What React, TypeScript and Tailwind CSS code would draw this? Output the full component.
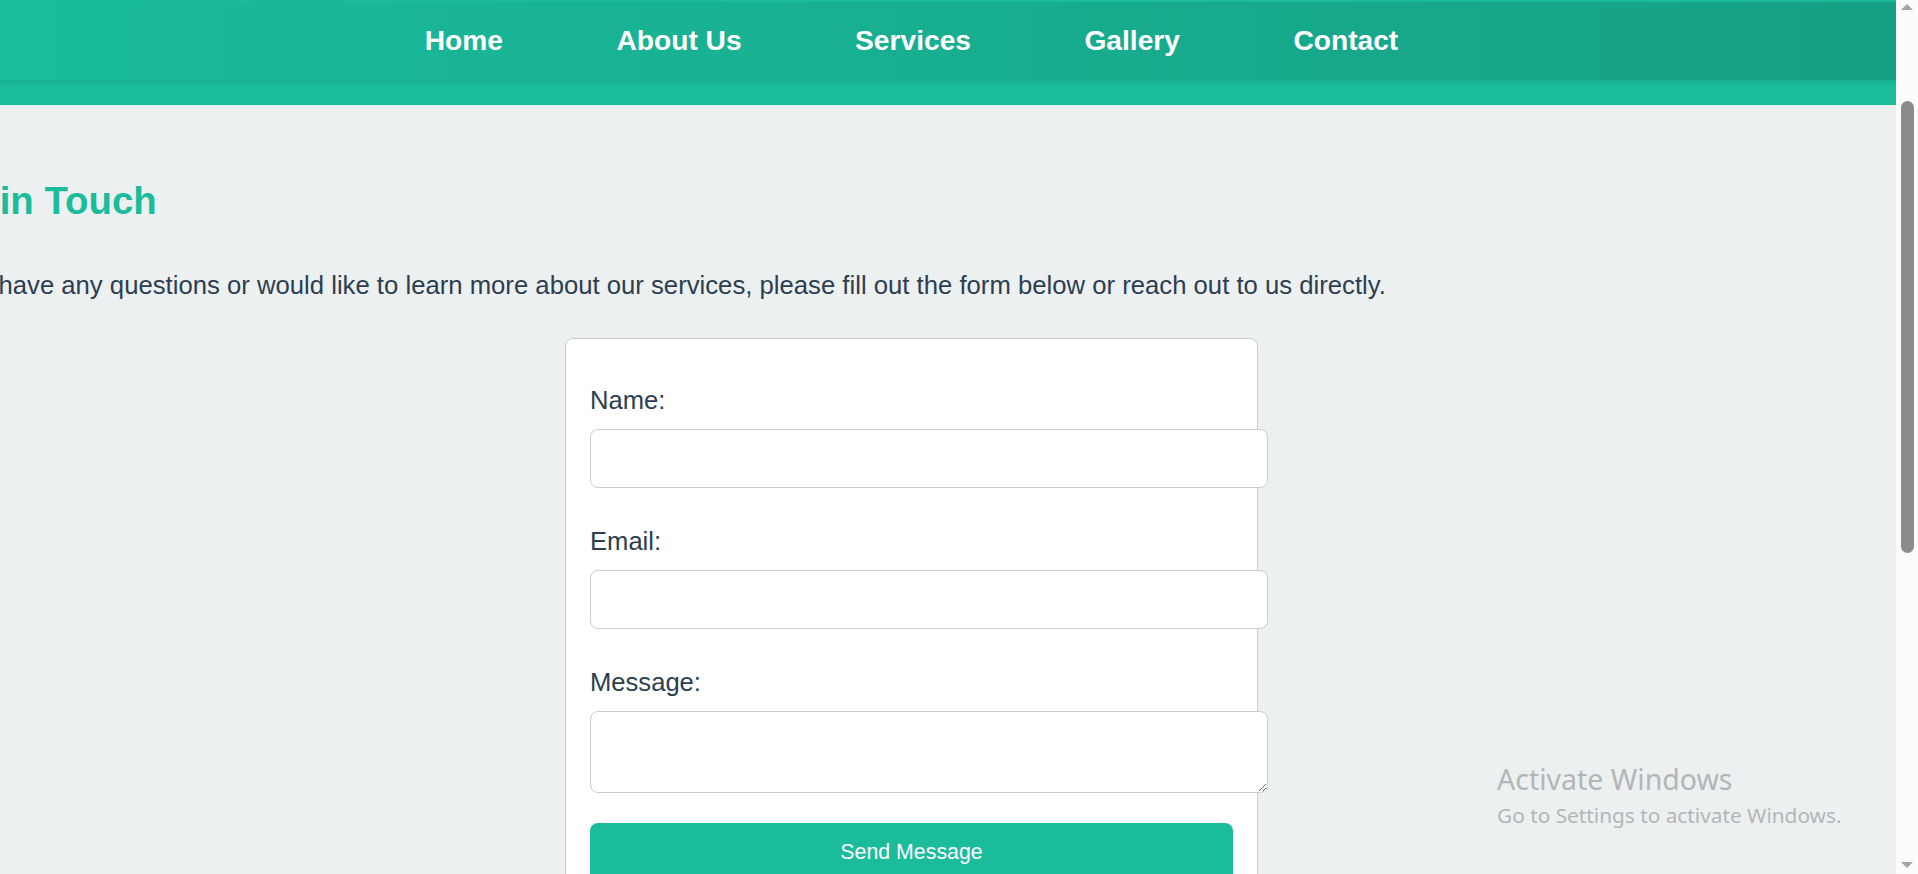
import React from "react";

const navItems = ["Home", "About Us", "Services", "Gallery", "Contact"];

function Field({ label, textarea, last }: { label: string; textarea?: boolean; last?: boolean }) {
  return (
    <div className={last ? "flex flex-col" : "flex flex-col mb-[39.6px]"}>
      <label className="block text-[25.6px] leading-[29.4px] text-[#2c3e50]">{label}</label>
      {textarea ? (
        <textarea className="mt-[13.2px] block w-[678px] h-[82px] bg-white border border-[#cccccc] rounded-[8px] outline-none resize" />
      ) : (
        <input
          type="text"
          className="mt-[13.2px] block w-[678px] h-[59px] bg-white border border-[#cccccc] rounded-[8px] outline-none"
        />
      )}
    </div>
  );
}

export default function App() {
  return (
    <div className="w-[1918px] h-[874px] overflow-hidden flex bg-[#ecf0f1] font-['Liberation_Sans',Arial,sans-serif]">
      <div className="relative w-[1896px] h-full overflow-hidden flex flex-col shrink-0">
        <header className="h-[105px] shrink-0 bg-[#1abc9c] pt-[2px]">
          <nav className="h-[78px] bg-linear-to-r from-[#1abc9c] to-[#16a085] shadow-[0_2px_4px_rgba(0,0,0,0.08)]">
            <ul className="w-[1823px] flex justify-center gap-[113.5px] pt-[23px]">
              {navItems.map((n) => (
                <li key={n} className="text-white font-bold text-[28.16px] leading-[32px] whitespace-nowrap">
                  {n}
                </li>
              ))}
            </ul>
          </nav>
        </header>

        <main className="w-[1823px] flex flex-col">
          <h2 className="mt-[74px] ml-[-75px] text-[38.4px] leading-[44px] font-bold text-[#1abc9c] whitespace-nowrap">
            Get in Touch
          </h2>
          <p className="mt-[48px] ml-[-71.5px] text-[25.7px] leading-[29px] text-[#2c3e50] whitespace-nowrap">
            If you have any questions or would like to learn more about our services, please fill out the form below or reach out to us directly.
          </p>
          <div className="mt-[38px] self-center w-[693px] bg-white border border-[#c9cdd0] rounded-[8px] px-[24px] pt-[47px] pb-[40px]">
            <form className="flex flex-col" onSubmit={(e) => e.preventDefault()}>
              <Field label="Name:" />
              <Field label="Email:" />
              <Field label="Message:" textarea last />
              <button
                type="submit"
                className="mt-[30.5px] w-[643px] h-[60px] bg-[#1abc9c] text-white text-[21.33px] rounded-[8px]"
              >
                Send Message
              </button>
            </form>
          </div>
        </main>

        <div className="absolute left-[1497px] top-[760px] pointer-events-none font-['Noto_Sans','Open_Sans',sans-serif] text-[#b3b6b8]">
          <div className="text-[28.5px] leading-[38px] whitespace-nowrap">Activate Windows</div>
          <div className="mt-[3px] text-[20.8px] leading-[28px] whitespace-nowrap">Go to Settings to activate Windows.</div>
        </div>
      </div>

      <div className="w-[22px] h-full bg-[#fbfbfb] flex flex-col items-center shrink-0">
        <div className="mt-[4px] w-0 h-0 border-l-[6px] border-r-[6px] border-b-[6px] border-l-transparent border-r-transparent border-b-[#a3a3a3]" />
        <div className="mt-[91px] w-[13px] h-[452px] rounded-full bg-[#8b8b8b]" />
        <div className="flex-1" />
        <div className="mb-[6px] w-0 h-0 border-l-[6px] border-r-[6px] border-t-[6px] border-l-transparent border-r-transparent border-t-[#a3a3a3]" />
      </div>
    </div>
  );
}
